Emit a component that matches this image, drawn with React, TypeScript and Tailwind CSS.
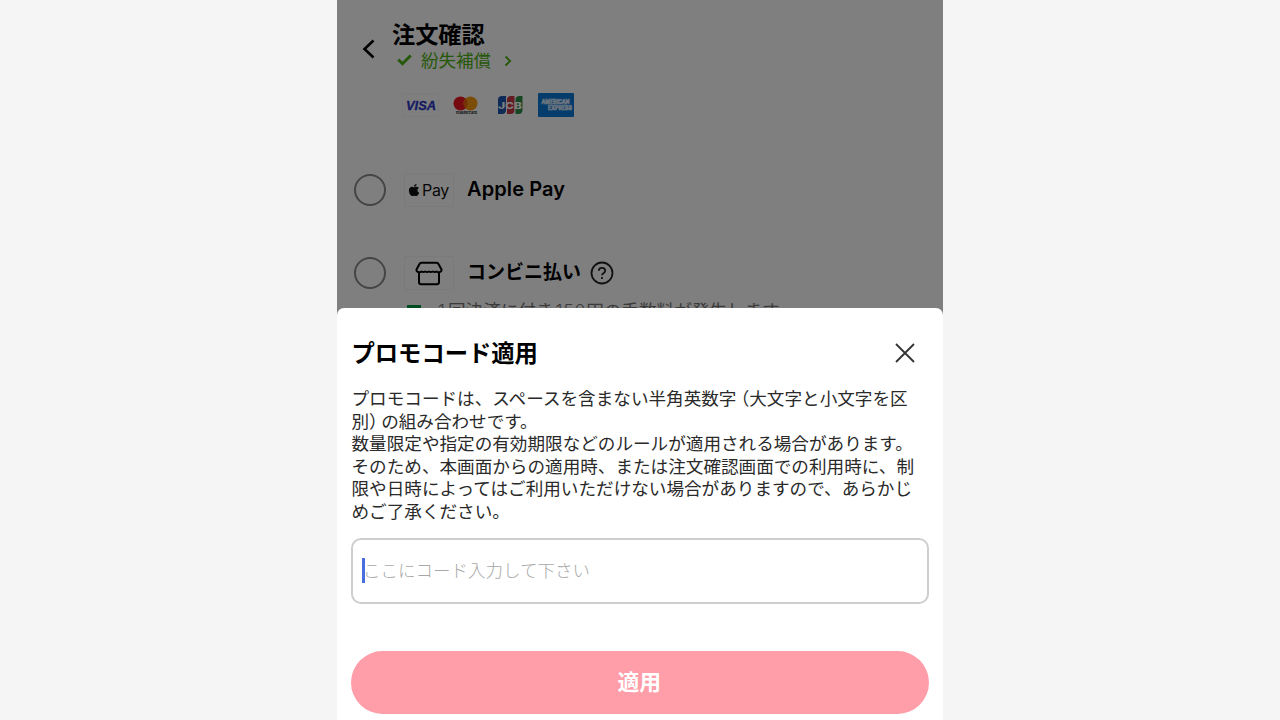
import React from 'react';
import { FaApple } from 'react-icons/fa';

const Radio = () => (
  <span className="w-8 h-8 shrink-0 rounded-full border-2 border-[#8a8a8a]" />
);

const CardLogos = () => (
  <div className="flex items-center gap-[9px] mt-[21px] ml-[65px]">
    <svg width="37" height="24" viewBox="0 0 37 24">
      <rect x="0.5" y="0.5" width="36" height="23" fill="none" stroke="#f7f7f7" />
      <text x="4" y="16.500" fontFamily="Liberation Sans, sans-serif" fontSize="13.5" fontWeight="700" fontStyle="italic" fill="#2a34c4" stroke="#2a34c4" strokeWidth="0.3" textLength="30" lengthAdjust="spacingAndGlyphs">VISA</text>
    </svg>
    <svg width="36" height="24" viewBox="0 0 36 24">
      <circle cx="12.500" cy="10.5" r="7" fill="#eb1520" />
      <circle cx="22.500" cy="10.5" r="7" fill="#f79a10" />
      <path d="M17.500 5.600a7 7 0 0 1 0 9.800a7 7 0 0 1 0-9.800z" fill="#f0600c" />
      <text x="8" y="21" fontFamily="Inter, sans-serif" fontSize="4" fontWeight="700" fill="#222" textLength="21" lengthAdjust="spacingAndGlyphs">mastercard</text>
    </svg>
    <svg width="36" height="24" viewBox="0 0 36 24">
      <path d="M9 3h4v14a4 4 0 0 1-4 4H5V7a4 4 0 0 1 4-4z" fill="#1c54ae" />
      <path d="M18 3h3.500v14a4 4 0 0 1-4 4H14V7a4 4 0 0 1 4-4z" fill="#c93642" />
      <path d="M26.500 3h3v14a4 4 0 0 1-4 4h-3V7a4 4 0 0 1 4-4z" fill="#2c8c48" />
      <text x="5" y="15.500" fontFamily="Inter, sans-serif" fontSize="9" fontWeight="800" fill="#fff" textLength="24" lengthAdjust="spacingAndGlyphs">JCB</text>
    </svg>
    <svg width="36" height="24" viewBox="0 0 36 24">
      <rect width="36" height="24" rx="1" fill="#0878d8" />
      <text x="3.500" y="11" fontFamily="Inter, sans-serif" fontSize="6" fontWeight="700" fill="#0878d8" stroke="#e8f2ff" strokeWidth="0.7" textLength="28" lengthAdjust="spacingAndGlyphs">AMERICAN</text>
      <text x="10" y="17" fontFamily="Inter, sans-serif" fontSize="6" fontWeight="700" fill="#0878d8" stroke="#e8f2ff" strokeWidth="0.7" textLength="24" lengthAdjust="spacingAndGlyphs">EXPRESS</text>
    </svg>
  </div>
);

const OrderPage = () => (
  <div className="h-[317px] overflow-hidden bg-white">
    {/* Header */}
    <header className="flex pt-[20px]">
      <svg className="ml-[25px] mt-[19px]" width="14" height="20" viewBox="0 0 14 20" fill="none" stroke="#000" strokeWidth="2.6">
        <path d="M11.500 1.500L2.500 10l9 8.500" />
      </svg>
      <div className="ml-4">
        <h1 className="text-[23.2px] leading-[26px] font-bold text-black">注文確認</h1>
        <div className="flex items-center h-6 mt-[2px] text-[17.5px] text-[#4cb012]">
          <svg className="ml-[5px]" width="15" height="12" viewBox="0 0 15 12" fill="none" stroke="currentColor" strokeWidth="3">
            <path d="M1.200 5.500l4.300 4.200L13.700 1.500" />
          </svg>
          <span className="ml-[9px]">紛失補償</span>
          <svg className="ml-[13px] mt-[2px]" width="8" height="12" viewBox="0 0 8 12" fill="none" stroke="currentColor" strokeWidth="1.8">
            <path d="M1.500 1.500L6.200 6l-4.700 4.500" />
          </svg>
        </div>
      </div>
    </header>

    <CardLogos />

    {/* Apple Pay */}
    <div className="flex items-center h-[34px] mt-[56px] pl-[17px]">
      <Radio />
      <div className="flex items-center justify-center gap-px w-[50px] h-[34px] pr-0.5 ml-[18px] border border-[#f5f5f5] text-[#111]">
        <FaApple size={14} />
        <span className="font-['Inter'] text-[16px] tracking-[-0.3px]">Pay</span>
      </div>
      <span className="ml-[13px] pb-[2px] font-['Inter'] text-[20px] font-semibold tracking-[0.1px] text-black">Apple Pay</span>
    </div>

    {/* Convenience store */}
    <div className="flex items-center h-[34px] mt-[49px] pl-[17px]">
      <Radio />
      <div className="flex items-center justify-center w-[50px] h-[34px] ml-[18px] border border-[#f5f5f5]">
        <svg width="28" height="25" viewBox="0 0 28 25" fill="none" stroke="#000" strokeWidth="2" strokeLinejoin="round">
          <path d="M6.500 1.800h15q1.500 0 2 1.200l3 5.500q.3 2.500-2.500 2.800q-1.600 0-2.500-.8q-1.800 1.200-3.700 0q-1.900 1.200-3.800 0q-1.900 1.200-3.800 0q-1.800 1.200-3.700 0q-.9.8-2.500.8q-2.800-.3-2.500-2.800l3-5.500q.5-1.200 2-1.200z" />
          <path d="M4 11.500v9.500q0 2.200 2.200 2.200h15.600q2.200 0 2.200-2.200v-9.500" />
        </svg>
      </div>
      <span className="ml-[13px] pb-[3px] text-[19px] font-bold text-black">コンビニ払い</span>
      <svg className="ml-[9px]" width="24" height="24" viewBox="0 0 24 24" fill="none" stroke="#222" strokeWidth="1.800">
        <circle cx="12" cy="12" r="10.500" />
        <path d="M8.800 9.800c0-4 6.400-4 6.400 0c0 2.500-3.200 2.300-3.200 4.400" />
        <path d="M12 16v2" />
      </svg>
    </div>

    {/* Fee note */}
    <div className="flex items-start pl-[70px] mt-[8px]">
      <span className="w-[14px] h-4 mt-[7px] mr-[17px] bg-[#009640]" />
      <p className="text-[17.6px] leading-6 whitespace-nowrap text-[#777]">
        <span className="font-['Inter'] font-light tracking-[3px]">1</span>回決済に付き<span className="ml-[2px] font-['Inter'] font-light tracking-[0.8px]">150</span>円の手数料が発生します
      </p>
    </div>
  </div>
);

const PromoSheet = () => (
  <section className="h-[420px] -mt-[9px] relative bg-white rounded-t-[7px] px-[14px] overflow-hidden">
    <div className="h-full flex flex-col">
      <div className="flex items-center justify-between pt-[27px] pl-[0.5px] pr-[13px]">
        <h2 className="text-[23.3px] leading-[34px] font-bold text-black">プロモコード適用</h2>
        <svg className="mt-px" width="22" height="22" viewBox="0 0 22 22" fill="none" stroke="#333" strokeWidth="1.800">
          <path d="M2 2l18 18M20 2L2 20" />
        </svg>
      </div>

      <p className="mt-[18px] pl-[0.5px] text-[17.6px] leading-[22.5px] text-[#2a2a2a] whitespace-nowrap">
        プロモコードは、スペースを含まない半角英数字<span className="-ml-[4.8px]">（</span>大文字と小文字を区<br />
        別<span className="-mr-[5.6px]">）</span>の組み合わせです。<br />
        数量限定や指定の有効期限などのルールが適用される場合があります。<br />
        そのため、本画面からの適用時、または注文確認画面での利用時に、制<br />
        限や日時によってはご利用いただけない場合がありますので、あらかじ<br />
        めご了承ください。
      </p>

      {/* Code input */}
      <div className="flex items-center shrink-0 h-[66px] w-[577.5px] mt-[16px] pl-[9px] border-2 border-[#cecece] rounded-[10px]">
        <span className="w-[3px] h-[25px] -mr-[2px] mb-px bg-[#4a6de0]" />
        <span className="pb-[2px] text-[17.5px] font-light text-[#a8a8a8]">ここにコード入力して下さい</span>
      </div>

      <button className="shrink-0 w-[577.5px] h-[63px] mt-[47px] pb-[2px] pr-px rounded-full bg-[#ff9da8] text-[21.8px] font-bold text-white">
        適用
      </button>
    </div>
  </section>
);

const App = () => {
  return (
    <div className="h-[720px] flex justify-center bg-[#f5f5f5] overflow-hidden font-['Noto_Sans_CJK_JP',sans-serif]">
      <main lang="ja" className="relative w-[606px] h-full overflow-hidden">
        <OrderPage />
        <div className="absolute inset-x-0 top-0 h-[320px] bg-black/50" />
        <PromoSheet />
      </main>
    </div>
  );
};

export default App;
